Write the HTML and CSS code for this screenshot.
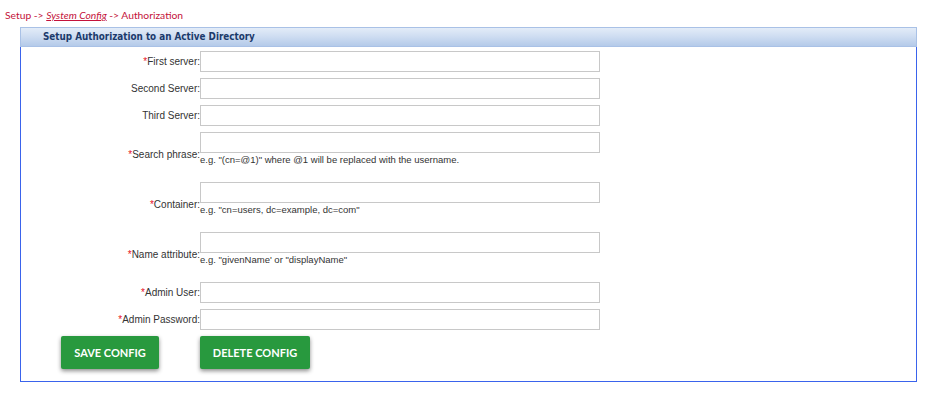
FILE: index.html
```html
<!DOCTYPE html>
<html lang="en">
<head>
    <meta charset="UTF-8">
    <title>Authorization</title>
    <link rel="stylesheet" href="styles.css">
</head>
<body>
    <div class="breadcrumb">
        Setup -&gt; <a href="#">System Config</a> -&gt; Authorization
    </div>

    <div class="panel">
        <div class="panel-header">Setup Authorization to an Active Directory</div>

        <form class="panel-body">
            <div class="row">
                <label for="first"><span class="req">*</span>First server:</label>
                <div class="field"><input type="text" id="first"></div>
            </div>
            <div class="row">
                <label for="second">Second Server:</label>
                <div class="field"><input type="text" id="second"></div>
            </div>
            <div class="row">
                <label for="third">Third Server:</label>
                <div class="field"><input type="text" id="third"></div>
            </div>
            <div class="row">
                <label for="search"><span class="req">*</span>Search phrase:</label>
                <div class="field with-hint">
                    <input type="text" id="search">
                    <span class="hint">e.g. "(cn=@1)" where @1 will be replaced with the username.</span>
                </div>
            </div>
            <div class="row">
                <label for="container"><span class="req">*</span>Container:</label>
                <div class="field with-hint">
                    <input type="text" id="container">
                    <span class="hint">e.g. "cn=users, dc=example, dc=com"</span>
                </div>
            </div>
            <div class="row">
                <label for="nameattr"><span class="req">*</span>Name attribute:</label>
                <div class="field with-hint">
                    <input type="text" id="nameattr">
                    <span class="hint">e.g. "givenName' or "displayName"</span>
                </div>
            </div>
            <div class="row">
                <label for="adminuser"><span class="req">*</span>Admin User:</label>
                <div class="field"><input type="text" id="adminuser"></div>
            </div>
            <div class="row">
                <label for="adminpass"><span class="req">*</span>Admin Password:</label>
                <div class="field"><input type="password" id="adminpass"></div>
            </div>

            <div class="buttons">
                <button type="button" class="btn btn-save">Save Config</button>
                <button type="button" class="btn btn-delete">Delete Config</button>
            </div>
        </form>
    </div>
</body>
</html>
```

FILE: styles.css
```css
* {
    margin: 0;
    padding: 0;
    box-sizing: border-box;
}

body {
    font-family: Arial, "Liberation Sans", sans-serif;
    background: #fff;
    padding: 9px 5px;
}

.breadcrumb {
    font-family: Lato, sans-serif;
    font-size: 10.3px;
    line-height: 13px;
    color: #c4123a;
    margin-bottom: 5px;
}

.breadcrumb a {
    color: #c4123a;
    font-style: italic;
}

.panel {
    margin-left: 15px;
    width: 897px;
    height: 355px;
    border: 1px solid #3a63ec;
    border-top: none;
}

.panel-header {
    margin: 0 -1px;
    height: 20px;
    border: 1px solid #a9c1e6;
    background: linear-gradient(#e3ecf8, #cddcf1 50%, #b4cae9);
    color: #1b3a6b;
    font-family: "DejaVu Sans Condensed", "DejaVu Sans", sans-serif;
    font-size: 9.8px;
    font-weight: bold;
    line-height: 18px;
    padding-left: 22px;
}

.panel-body {
    padding-top: 4px;
}

.row {
    display: flex;
    align-items: center;
    margin-bottom: 6px;
}

.row label {
    width: 179px;
    text-align: right;
    font-size: 10px;
    color: #333;
}

.req {
    color: #e8101e;
}

.field input {
    display: block;
    width: 400px;
    height: 21px;
    border: 1px solid #c8c8c8;
    font-size: 11px;
    padding: 0 4px;
}

.field.with-hint {
    padding-bottom: 10px;
}

.hint {
    display: block;
    font-size: 9.5px;
    line-height: 13px;
    color: #333;
}

.buttons {
    display: flex;
    gap: 41px;
    padding-left: 40px;
}

.btn {
    height: 33px;
    padding: 0;
    border: none;
    border-radius: 2px;
    background: #28993e;
    color: #fff;
    font-family: Lato, sans-serif;
    font-weight: bold;
    font-size: 11px;
    white-space: nowrap;
    text-transform: uppercase;
    box-shadow: 0 2px 4px rgba(0, 0, 0, 0.45);
    cursor: pointer;
}

.btn-save {
    width: 98px;
}

.btn-delete {
    width: 110px;
}
```
